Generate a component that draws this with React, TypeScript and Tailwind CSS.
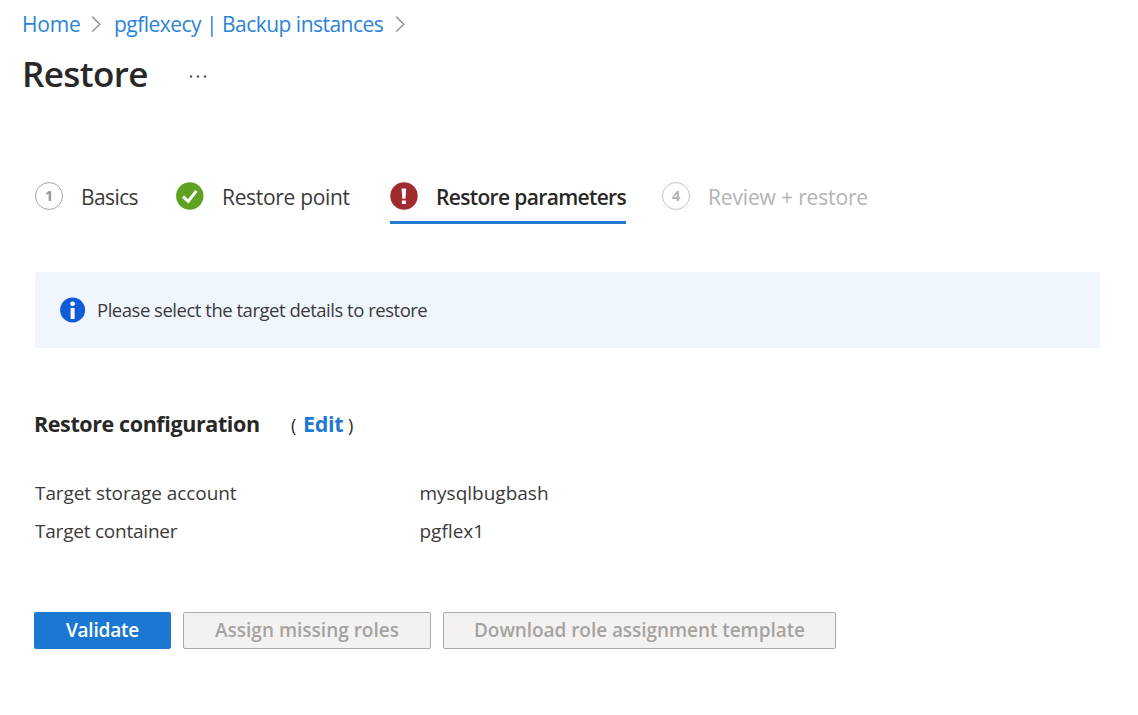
import type { ReactNode } from "react";

function Separator() {
  return (
    <svg className="h-[18px] w-[11px] shrink-0" viewBox="0 0 11 18" fill="none" stroke="#8a8886" strokeWidth="1.3">
      <path d="M1.2 1.8 8.8 9.2 1.2 16.6" />
    </svg>
  );
}

function StepNumber({ children, faded }: { children: ReactNode; faded?: boolean }) {
  return (
    <span
      className={`mb-[4px] flex size-[28px] shrink-0 items-center justify-center rounded-full border-[1.5px] text-[15px] font-bold leading-none ${
        faded ? "border-[#c4c4c4] text-[#b3b3b3]" : "border-[#a6a6a6] text-[#979797]"
      }`}
    >
      {children}
    </span>
  );
}

function CheckIcon() {
  return (
    <svg className="mb-[4px] size-[28px] shrink-0" viewBox="0 0 28 28">
      <circle cx="13.8" cy="14" r="13.7" fill="#5fa221" />
      <path d="M7 14.6 12.2 19.4 20.4 8.8" fill="none" stroke="#fff" strokeWidth="3" />
    </svg>
  );
}

function ErrorIcon() {
  return (
    <svg className="mb-[4px] size-[28px] shrink-0" viewBox="0 0 28 28">
      <circle cx="14" cy="14" r="13.7" fill="#a02b2f" />
      <path d="M11.6 6.4h4.6l-.7 10.4h-3.2zM11.9 18.4h4v3.6h-4z" fill="#fff" />
    </svg>
  );
}

function InfoIcon() {
  return (
    <svg className="size-[26px] shrink-0" viewBox="0 0 26 26">
      <circle cx="12.6" cy="13" r="12.5" fill="#0f5bd8" />
      <circle cx="12.6" cy="6.8" r="2.4" fill="#fff" />
      <path d="M10.6 11h4v11h-4z" fill="#fff" />
    </svg>
  );
}

export default function App() {
  return (
    <div className="h-[715px] w-[1138px] overflow-hidden bg-white pt-[10px] font-['Open_Sans','Noto_Sans',sans-serif] text-[#3b3a39]">
      <nav className="flex h-[28px] items-center whitespace-nowrap pl-[22px] text-[21px] leading-[28px] text-[#2b83d8]">
        <a className="w-[69px] tracking-[-0.2px]">Home</a>
        <Separator />
        <a className="ml-[12px] w-[281px] tracking-[-0.52px]">pgflexecy | Backup instances</a>
        <Separator />
      </nav>

      <header className="flex h-[71px] items-center pl-[22px]">
        <h1 className="w-[167px] text-[35px] font-semibold leading-[48px] tracking-[-0.6px] text-[#292827]">Restore</h1>
        <svg className="mt-[5px] h-[3px] w-[18px]" viewBox="0 0 18 3" fill="#55524f">
          <circle cx="2" cy="1.5" r="1.2" />
          <circle cx="9" cy="1.5" r="1.2" />
          <circle cx="16" cy="1.5" r="1.2" />
        </svg>
      </header>

      <div className="mt-[62px] flex h-[53px] whitespace-nowrap pl-[35px] text-[21px] leading-[28px] text-[#3b3a39]">
        <div className="flex w-[141px] items-center gap-[18px]">
          <StepNumber>1</StepNumber>
          <span className="mb-[1px] tracking-[-0.6px]">Basics</span>
        </div>
        <div className="flex w-[214px] items-center gap-[18px]">
          <CheckIcon />
          <span className="mb-[1px] tracking-[-0.32px]">Restore point</span>
        </div>
        <div className="flex w-[236px] items-center gap-[18px] border-b-[3px] border-[#1f7ad1] pt-[3px] font-semibold text-[#292827]">
          <ErrorIcon />
          <span className="mb-[1px] tracking-[-0.65px]">Restore parameters</span>
        </div>
        <div className="ml-[36px] flex items-center gap-[18px] text-[#b3b3b3]">
          <StepNumber faded>4</StepNumber>
          <span className="mb-[1px] tracking-[-0.15px]">Review + restore</span>
        </div>
      </div>

      <div className="ml-[35px] mt-[48px] flex h-[76px] w-[1065px] items-center gap-[11px] rounded-[2px] bg-[#eff6ff] pl-[25px]">
        <InfoIcon />
        <span className="text-[18.5px] leading-[26px] tracking-[-0.48px]">Please select the target details to restore</span>
      </div>

      <div className="ml-[34px] mt-[61px] flex h-[30px] items-center whitespace-nowrap text-[21.5px] font-bold leading-[30px] text-[#292827]">
        <h2 className="w-[257px] tracking-[-0.4px]">Restore configuration</h2>
        <span className="mt-[2px] w-[12px] text-[18px] font-normal">(</span>
        <a className="w-[45px] tracking-[-0.3px] text-[#1f7ad1]">Edit</a>
        <span className="mt-[2px] text-[18px] font-normal">)</span>
      </div>

      <dl className="ml-[35px] mt-[35px] grid w-fit grid-cols-[384.5px_auto] text-[19px] leading-[38px]">
        <dt className="tracking-[-0.08px]">Target storage account</dt>
        <dd>mysqlbugbash</dd>
        <dt className="tracking-[-0.22px]">Target container</dt>
        <dd>pgflex1</dd>
      </dl>

      <div className="ml-[34px] mt-[62px] flex gap-[12px] whitespace-nowrap text-[19px] font-semibold leading-[26px]">
        <button className="h-[37px] w-[137px] rounded-[2px] bg-[#1a78d2] pb-[2px] tracking-[-0.2px] text-white">Validate</button>
        <button className="h-[37px] w-[248px] rounded-[2px] border border-[#acaaa8] bg-[#f3f2f1] pb-[2px] text-[#a5a3a1]">Assign missing roles</button>
        <button className="h-[37px] w-[393px] rounded-[2px] border border-[#acaaa8] bg-[#f3f2f1] pb-[2px] tracking-[-0.06px] text-[#a5a3a1]">Download role assignment template</button>
      </div>
    </div>
  );
}
